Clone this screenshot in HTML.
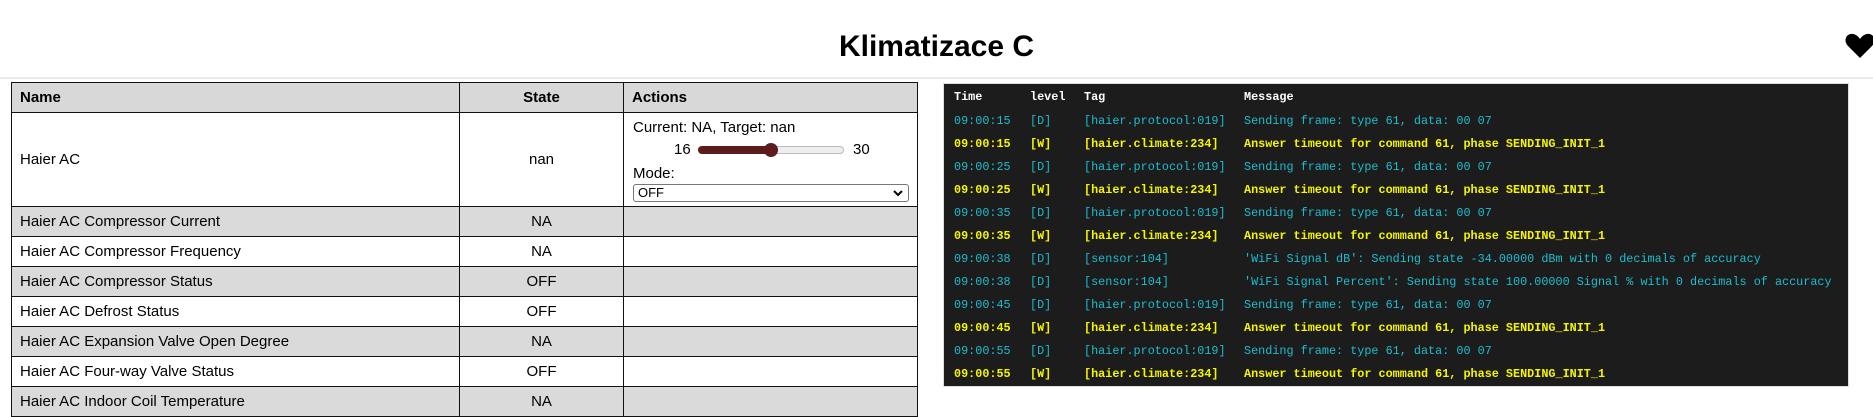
<!DOCTYPE html>
<html><head><meta charset="utf-8"><style>
*{margin:0;padding:0;box-sizing:border-box}
body{width:1873px;height:401px;overflow:hidden;background:#fff;font-family:"Liberation Sans",sans-serif;color:#000;position:relative}
h1{position:absolute;left:0;width:1873px;top:27px;text-align:center;font-size:30px;font-weight:bold;line-height:40px}
.hr{position:absolute;left:0;top:77px;width:1873px;height:2px;background:#eaeaea}
table{position:absolute;left:11px;top:82px;border-collapse:collapse;font-size:15px;table-layout:fixed}
td,th{border:1px solid #111;height:30px;padding:0 8px;vertical-align:middle}
th{background:#d8d8d8;text-align:left;font-weight:bold}
tr.g td{background:#dadada}
.c{text-align:center}
.log{position:absolute;left:943px;top:83px;width:906px;height:304px;background:#1c1c1c;border:1px solid #ddd;font-family:"Liberation Mono",monospace;font-size:11.8px}
.r{position:absolute;left:0;height:23px;white-space:pre}
.r span{position:absolute;top:0}
.h{color:#fff;font-weight:bold}
.d{color:#1cbdd0}
.w{color:#f5f500;font-weight:bold}
</style></head><body>
<h1>Klimatizace C</h1>
<svg style="position:absolute;left:1845px;top:33px" width="30" height="26" viewBox="0 0 30 26"><path d="M15 25 L3 13 C-2 8 1 0 8 1 C11 1.5 13.5 3.5 15 6 C16.5 3.5 19 1.5 22 1 C29 0 32 8 27 13 Z" fill="#000"/></svg>
<div class="hr"></div>
<table>
<colgroup><col style="width:448px"><col style="width:164px"><col style="width:294px"></colgroup>
<tr><th>Name</th><th class="c">State</th><th>Actions</th></tr>
<tr><td style="height:94px">Haier AC</td><td class="c">nan</td><td style="position:relative">
<div style="position:absolute;left:9px;top:5px;line-height:20px">Current: NA, Target: nan</div>
<div style="position:absolute;left:50px;top:27px;line-height:20px">16</div>
<div style="position:absolute;left:74px;top:33px;width:146px;height:8px;border-radius:4px;background:#eee;border:1px solid #bbb"></div>
<div style="position:absolute;left:74px;top:33px;width:74px;height:8px;border-radius:4px;background:#5c1c1c"></div>
<div style="position:absolute;left:140px;top:30px;width:14px;height:14px;border-radius:7px;background:#5c1c1c"></div>
<div style="position:absolute;left:229px;top:27px;line-height:20px">30</div>
<div style="position:absolute;left:9px;top:51px;line-height:20px">Mode:</div>
<div style="position:absolute;left:9px;top:71px;width:276px;height:18px;border:1px solid #777;border-radius:3px;font-size:13px;line-height:16px;padding-left:4px">OFF<svg style="position:absolute;right:5px;top:5px" width="10" height="7" viewBox="0 0 10 7"><path d="M1 1 L5 5 L9 1" stroke="#000" stroke-width="2" fill="none"/></svg></div>
</td></tr>
<tr class="g"><td>Haier AC Compressor Current</td><td class="c">NA</td><td></td></tr>
<tr><td>Haier AC Compressor Frequency</td><td class="c">NA</td><td></td></tr>
<tr class="g"><td>Haier AC Compressor Status</td><td class="c">OFF</td><td></td></tr>
<tr><td>Haier AC Defrost Status</td><td class="c">OFF</td><td></td></tr>
<tr class="g"><td>Haier AC Expansion Valve Open Degree</td><td class="c">NA</td><td></td></tr>
<tr><td>Haier AC Four-way Valve Status</td><td class="c">OFF</td><td></td></tr>
<tr class="g"><td>Haier AC Indoor Coil Temperature</td><td class="c">NA</td><td></td></tr>
</table>
<div class="log">
<div class="r h" style="top:6px"><span style="left:10px">Time</span><span style="left:86px">level</span><span style="left:140px">Tag</span><span style="left:300px">Message</span></div>
<div class="r d" style="top:30px"><span style="left:10px">09:00:15</span><span style="left:86px">[D]</span><span style="left:140px">[haier.protocol:019]</span><span style="left:300px">Sending frame: type 61, data: 00 07</span></div>
<div class="r w" style="top:53px"><span style="left:10px">09:00:15</span><span style="left:86px">[W]</span><span style="left:140px">[haier.climate:234]</span><span style="left:300px">Answer timeout for command 61, phase SENDING_INIT_1</span></div>
<div class="r d" style="top:76px"><span style="left:10px">09:00:25</span><span style="left:86px">[D]</span><span style="left:140px">[haier.protocol:019]</span><span style="left:300px">Sending frame: type 61, data: 00 07</span></div>
<div class="r w" style="top:99px"><span style="left:10px">09:00:25</span><span style="left:86px">[W]</span><span style="left:140px">[haier.climate:234]</span><span style="left:300px">Answer timeout for command 61, phase SENDING_INIT_1</span></div>
<div class="r d" style="top:122px"><span style="left:10px">09:00:35</span><span style="left:86px">[D]</span><span style="left:140px">[haier.protocol:019]</span><span style="left:300px">Sending frame: type 61, data: 00 07</span></div>
<div class="r w" style="top:145px"><span style="left:10px">09:00:35</span><span style="left:86px">[W]</span><span style="left:140px">[haier.climate:234]</span><span style="left:300px">Answer timeout for command 61, phase SENDING_INIT_1</span></div>
<div class="r d" style="top:168px"><span style="left:10px">09:00:38</span><span style="left:86px">[D]</span><span style="left:140px">[sensor:104]</span><span style="left:300px">'WiFi Signal dB': Sending state -34.00000 dBm with 0 decimals of accuracy</span></div>
<div class="r d" style="top:191px"><span style="left:10px">09:00:38</span><span style="left:86px">[D]</span><span style="left:140px">[sensor:104]</span><span style="left:300px">'WiFi Signal Percent': Sending state 100.00000 Signal % with 0 decimals of accuracy</span></div>
<div class="r d" style="top:214px"><span style="left:10px">09:00:45</span><span style="left:86px">[D]</span><span style="left:140px">[haier.protocol:019]</span><span style="left:300px">Sending frame: type 61, data: 00 07</span></div>
<div class="r w" style="top:237px"><span style="left:10px">09:00:45</span><span style="left:86px">[W]</span><span style="left:140px">[haier.climate:234]</span><span style="left:300px">Answer timeout for command 61, phase SENDING_INIT_1</span></div>
<div class="r d" style="top:260px"><span style="left:10px">09:00:55</span><span style="left:86px">[D]</span><span style="left:140px">[haier.protocol:019]</span><span style="left:300px">Sending frame: type 61, data: 00 07</span></div>
<div class="r w" style="top:283px"><span style="left:10px">09:00:55</span><span style="left:86px">[W]</span><span style="left:140px">[haier.climate:234]</span><span style="left:300px">Answer timeout for command 61, phase SENDING_INIT_1</span></div>
</div>
</body></html>
